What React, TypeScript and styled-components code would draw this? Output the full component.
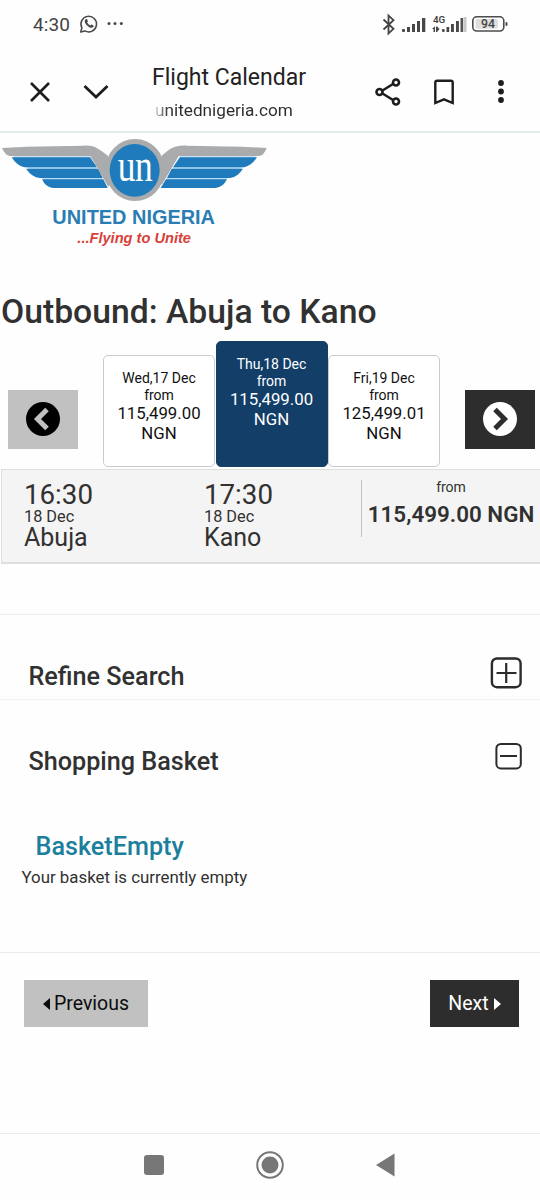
import React from "react";
import styled, { createGlobalStyle } from "styled-components";

const GlobalStyle = createGlobalStyle`
  * { box-sizing: border-box; }
  html, body { margin: 0; padding: 0; background: #fefefe; }
  body { font-family: Roboto, "Liberation Sans", sans-serif; color: #313131; }
  h1, h2, h3, p { margin: 0; font-weight: 500; }
  svg { display: block; flex: none; }
  button { font-family: inherit; border: 0; padding: 0; background: none; }
`;

const Screen = styled.div`
  width: 540px;
  height: 1200px;
  overflow: hidden;
  display: flex;
  flex-direction: column;
`;

const StatusBar = styled.div`
  height: 48px;
  padding: 0 30px 0 33px;
  display: flex;
  align-items: center;
  justify-content: space-between;
`;

const StatusGroup = styled.div`
  display: flex;
  align-items: center;
`;

const Clock = styled.span`
  font-size: 19px;
  line-height: 22px;
  letter-spacing: 0.1px;
  width: 46px;
  padding-top: 2px;
  color: #444;
`;

const Toolbar = styled.header`
  height: 85px;
  border-bottom: 2px solid #e6ebeb;
  display: flex;
  align-items: flex-start;
  color: #1d1d1d;
`;

const ToolButton = styled.button<{ $width: number }>`
  width: ${(p) => p.$width}px;
  height: 40px;
  margin-top: 24px;
  display: flex;
  align-items: center;
  justify-content: center;
  color: inherit;
`;

const PageInfo = styled.div`
  margin-left: 39px;
  width: 197px;
  padding-top: 15px;
`;

const PageTitle = styled.div`
  font-size: 23px;
  line-height: 30px;
  color: #222;
`;

const PageUrl = styled.div`
  margin-top: 5px;
  font-size: 17.2px;
  line-height: 24px;
  white-space: nowrap;
  color: transparent;
  background: linear-gradient(90deg, #fefefe 0, #2c2c2c 16px);
  background-clip: text;
  -webkit-background-clip: text;
  padding-left: 3px;
`;

const Heading = styled.h1`
  font-size: 33.7px;
  line-height: 40px;
  margin: 32px 0 0 1px;
  white-space: nowrap;
`;

const Calendar = styled.section`
  height: 126px;
  margin-top: 9px;
  display: flex;
  align-items: flex-end;
`;

const ArrowButton = styled.button<{ $dark?: boolean }>`
  width: 70px;
  height: 59px;
  margin: ${(p) => (p.$dark ? "0 0 18px 24px" : "0 25px 18px 8px")};
  background: ${(p) => (p.$dark ? "#2d2d2d" : "#c1c1c1")};
  display: flex;
  align-items: center;
  justify-content: center;
`;

const DayCard = styled.div<{ $active?: boolean }>`
  width: 112px;
  height: ${(p) => (p.$active ? 126 : 112)}px;
  margin-right: 0.5px;
  padding-top: 14px;
  border: 1px solid ${(p) => (p.$active ? "#123e68" : "#cbcbcb")};
  border-radius: 5px;
  background: ${(p) => (p.$active ? "#123e68" : "#fff")};
  color: ${(p) => (p.$active ? "#fff" : "#111")};
  text-align: center;
`;

const DayLabel = styled.div`
  font-size: 14px;
  line-height: 17px;
`;

const DayPrice = styled.div`
  font-size: 16.8px;
  line-height: 19.5px;
`;

const FlightRow = styled.section`
  margin: 2px 0 0 1px;
  height: 95px;
  padding-left: 22px;
  display: flex;
  background: #f4f4f4;
  border: solid #dedede;
  border-width: 1px 0 2px 1px;
`;

const Stop = styled.div`
  width: 180px;
  padding-top: 9px;
`;

const StopTime = styled.div`
  font-size: 27.7px;
  line-height: 32px;
`;

const StopDate = styled.div`
  margin-top: -1px;
  font-size: 16.3px;
  line-height: 14px;
`;

const StopCity = styled.div`
  font-size: 25px;
  line-height: 28px;
`;

const Fare = styled.div`
  width: 179px;
  margin: 10px 0 0 -23px;
  height: 57px;
  border-left: 1px solid #c2c2c2;
  text-align: center;
  white-space: nowrap;
`;

const FareLabel = styled.div`
  font-size: 14px;
  line-height: 16px;
  margin-top: -1px;
`;

const FareAmount = styled.div`
  font-size: 22.4px;
  line-height: 38px;
  font-weight: 600;
`;

const Panel = styled.section<{ $height: number; $gap?: number }>`
  margin-top: ${(p) => p.$gap ?? 0}px;
  height: ${(p) => p.$height}px;
  border-top: 1px solid #efefef;
`;

const PanelHeader = styled.div`
  height: 84px;
  padding: 0 18px 0 28.5px;
  display: flex;
  justify-content: space-between;
`;

const PanelTitle = styled.h2`
  margin-top: 47px;
  font-size: 25.2px;
  line-height: 30px;
`;

const BasketTitle = styled.h3`
  margin: 47px 0 0 35.5px;
  font-size: 25.2px;
  line-height: 32px;
  color: #1c7f9c;
`;

const BasketText = styled.p`
  margin: 4px 0 0 21.5px;
  font-size: 16.85px;
  line-height: 20px;
  font-weight: 400;
`;

const Pager = styled.footer`
  height: 181px;
  border-top: 1px solid #ececec;
  padding: 27px 21px 0 24px;
  display: flex;
  justify-content: space-between;
`;

const PagerButton = styled.button<{ $dark?: boolean }>`
  height: 47px;
  width: ${(p) => (p.$dark ? 89 : 124)}px;
  display: flex;
  align-items: center;
  justify-content: center;
  gap: ${(p) => (p.$dark ? 5 : 4)}px;
  font-size: 19.5px;
  line-height: 24px;
  background: ${(p) => (p.$dark ? "#2d2d2d" : "#c1c1c1")};
  color: ${(p) => (p.$dark ? "#fff" : "#0c0c0c")};
`;

const SystemNav = styled.nav`
  height: 66px;
  border-top: 1px solid #ebebeb;
  display: flex;
  padding: 15px 0 0 138px;
  gap: 84px;
`;

const IconSlot = styled.div<{ $top: number }>`
  padding-top: ${(p) => p.$top}px;
`;

const WhatsAppIcon = () => (
  <svg width="20" height="20" viewBox="0 0 20 20">
    <path d="M1.7 18l1.2-4.2A7.8 7.8 0 1 1 6 16.9z" fill="none" stroke="#484848" strokeWidth="1.5" strokeLinejoin="round" />
    <path d="M6.7 5.3c.6-.5 1.2-.4 1.5.3l.6 1.3c.1.4 0 .6-.7 1.4.8 1.6 1.7 2.400 3.300 3.200.8-.9 1-1 1.400-.9l1.500.8c.5.3.5.7.1 1.300-1 1.400-2.600 1.200-4.200.5A8.800 8.800 0 0 1 6 8.800C5.500 7.300 5.700 6.200 6.700 5.300z" fill="#484848" />
  </svg>
);

const StatusIcons = () => (
  <svg width="128" height="24" viewBox="0 0 128 24">
    <path d="M1.500 7.500l10 9.300-5 4.700v-18l5 4.700-10 9.300" fill="none" stroke="#444" strokeWidth="1.800" />
    <g fill="#484848">
      <rect x="20" y="17" width="3" height="3" rx="1" />
      <rect x="25" y="15" width="3" height="5" />
      <rect x="30" y="12" width="3" height="8" />
      <rect x="35" y="9" width="3" height="11" />
      <rect x="40" y="6" width="3.300" height="14" />
      <rect x="60" y="17" width="2.700" height="3" rx="1" />
      <rect x="64.500" y="15" width="2.700" height="5" />
      <rect x="69" y="12" width="2.900" height="8" />
      <rect x="74" y="9" width="2.900" height="11" />
      <rect x="78.500" y="6" width="2.700" height="14" fill="#555" />
      <path d="M50 17l3-2.800V20h-1.500v-3zM54 14.500h1.200L57.500 17 55 20h-1z" />
    </g>
    <rect x="81.800" y="5" width="2.700" height="15" fill="#c8c8c8" />
    <text x="51" y="11" fontSize="9.800" fontWeight="600" fill="#444" fontFamily="Roboto, sans-serif">4G</text>
    <rect x="90.800" y="4.800" width="31" height="14.200" rx="4" fill="#fefefe" stroke="#4c4c4c" strokeWidth="1.600" />
    <rect x="93.500" y="7" width="22.500" height="9.800" rx="2" fill="#dedede" />
    <text x="99" y="16.300" fontSize="12.300" fontWeight="500" fill="#444" fontFamily="Roboto, sans-serif">94</text>
    <rect x="123.500" y="10" width="2" height="4" rx="1" fill="#4c4c4c" />
  </svg>
);

const Logo = () => (
  <svg width="280" height="127" viewBox="0 9 840 381">
    <path d="M38 79H270L322 172 160 172 120 140 80 112z" fill="#b9dcf2" />
    <path d="M768 79H540L484 172 647 172 690 140 728 112z" fill="#b9dcf2" />
    <g fill="#1f7bbb">
      <path d="M35 82H270L291 112H73Q51 108 35 82z" />
      <path d="M78 116H295L308 144H119Q96 142 78 116z" />
      <path d="M126 148H310L323 174H158Q136 171 126 148z" />
      <path d="M771 82H540L519 112H733Q756 106 771 82z" />
      <path d="M729 116H515L501 144H691Q714 140 729 116z" />
      <path d="M681 148H498L482 174H647Q670 171 681 148z" />
    </g>
    <g fill="#aaabac">
      <path d="M6 54L80 50 250 47C290 45 298 61 324 77L330 160 325 171 271 78H30Q15 76 6 54z" />
      <path d="M800 54L726 50 560 47C515 45 506 62 485 77L480 165 487 162 536 78H778Q792 76 800 54z" />
      <ellipse cx="405" cy="120" rx="89" ry="93" />
    </g>
    <ellipse cx="404" cy="121" rx="75" ry="79" fill="#1f7bbb" />
    <g transform="translate(353 154) scale(0.76 1)">
      <text fontFamily="'Liberation Serif', serif" fontSize="140" letterSpacing="-2" fill="#fff">un</text>
    </g>
    <text x="157" y="283" fontFamily="'Liberation Sans', sans-serif" fontWeight="700" fontSize="61" textLength="488" lengthAdjust="spacingAndGlyphs" fill="#2a7db3">UNITED NIGERIA</text>
    <text x="232" y="339" fontFamily="'Liberation Sans', sans-serif" fontWeight="700" fontStyle="italic" fontSize="44" textLength="341" lengthAdjust="spacingAndGlyphs" fill="#d8413a">...Flying to Unite</text>
  </svg>
);

const CircleChevron = ({ disc, mark, flip }: { disc: string; mark: string; flip?: boolean }) => (
  <svg width="36" height="35" viewBox="0 0 36 35">
    <circle cx="18" cy="17" r="17" fill={disc} />
    <path d={flip ? "M13 7.500L22.500 17 13 26.500" : "M22 7.500L12.500 17 22 26.500"} fill="none" stroke={mark} strokeWidth="5" />
  </svg>
);

const days = [
  { date: "Wed,17 Dec", price: "115,499.00" },
  { date: "Thu,18 Dec", price: "115,499.00", active: true },
  { date: "Fri,19 Dec", price: "125,499.01" },
];

const stops = [
  { time: "16:30", date: "18 Dec", city: "Abuja" },
  { time: "17:30", date: "18 Dec", city: "Kano" },
];

export default function App() {
  return (
    <Screen>
      <GlobalStyle />
      <StatusBar>
        <StatusGroup>
          <Clock>4:30</Clock>
          <WhatsAppIcon />
          <svg width="28" height="20" viewBox="0 0 28 20" fill="#484848">
            <circle cx="10" cy="9.500" r="1.500" />
            <circle cx="16" cy="9.500" r="1.500" />
            <circle cx="22.300" cy="9.500" r="1.500" />
          </svg>
        </StatusGroup>
        <StatusIcons />
      </StatusBar>
      <Toolbar>
        <ToolButton $width={79}>
          <svg width="22" height="22" viewBox="0 0 22 22" fill="none" stroke="currentColor" strokeWidth="2.600">
            <path d="M2 2l18 18M20 2L2 20" />
          </svg>
        </ToolButton>
        <ToolButton $width={34}>
          <svg width="26" height="16" viewBox="0 0 26 16" fill="none" stroke="currentColor" strokeWidth="2.800">
            <path d="M1.500 2l11.500 11L24.500 2" />
          </svg>
        </ToolButton>
        <PageInfo>
          <PageTitle>Flight Calendar</PageTitle>
          <PageUrl>unitednigeria.com</PageUrl>
        </PageInfo>
        <ToolButton $width={78}>
          <svg width="28" height="30" viewBox="0 0 28 30" fill="none" stroke="currentColor" strokeWidth="2.600">
            <path d="M8.500 13.500L19 7M8.500 16.500L19 23" />
            <circle cx="5.500" cy="15" r="3" />
            <circle cx="22" cy="5.500" r="3" />
            <circle cx="22" cy="24.500" r="3" />
          </svg>
        </ToolButton>
        <ToolButton $width={34}>
          <svg width="22" height="28" viewBox="0 0 22 28" fill="none" stroke="currentColor" strokeWidth="2.400">
            <path d="M2.300 25V4.500Q2.300 2.800 4 2.800H18Q19.700 2.800 19.700 4.500V25L11 21.300z" />
          </svg>
        </ToolButton>
        <ToolButton $width={79}>
          <svg width="8" height="26" viewBox="0 0 8 26" fill="currentColor">
            <circle cx="4" cy="4" r="2.900" />
            <circle cx="4" cy="12.500" r="2.900" />
            <circle cx="4" cy="21" r="2.900" />
          </svg>
        </ToolButton>
      </Toolbar>

      <Logo />
      <Heading>Outbound: Abuja to Kano</Heading>

      <Calendar>
        <ArrowButton>
          <CircleChevron disc="#000" mark="#c1c1c1" />
        </ArrowButton>
        {days.map((day) => (
          <DayCard key={day.date} $active={day.active}>
            <DayLabel>{day.date}</DayLabel>
            <DayLabel>from</DayLabel>
            <DayPrice>{day.price}</DayPrice>
            <DayPrice>NGN</DayPrice>
          </DayCard>
        ))}
        <ArrowButton $dark>
          <CircleChevron disc="#fff" mark="#2d2d2d" flip />
        </ArrowButton>
      </Calendar>

      <FlightRow>
        {stops.map((stop) => (
          <Stop key={stop.city}>
            <StopTime>{stop.time}</StopTime>
            <StopDate>{stop.date}</StopDate>
            <StopCity>{stop.city}</StopCity>
          </Stop>
        ))}
        <Fare>
          <FareLabel>from</FareLabel>
          <FareAmount>115,499.00 NGN</FareAmount>
        </Fare>
      </FlightRow>

      <Panel $height={85} $gap={50}>
        <PanelHeader>
          <PanelTitle>Refine Search</PanelTitle>
          <IconSlot $top={42}>
            <svg width="32" height="32" viewBox="0 0 32 32" fill="none" stroke="#2b2b2b" strokeWidth="2.400">
              <rect x="1.900" y="1.500" width="28.700" height="28.700" rx="5" />
              <path d="M6.500 16H26.500M16.200 6V26" strokeWidth="2.200" />
            </svg>
          </IconSlot>
        </PanelHeader>
      </Panel>
      <Panel $height={253}>
        <PanelHeader>
          <PanelTitle>Shopping Basket</PanelTitle>
          <IconSlot $top={42}>
            <svg width="28" height="28" viewBox="0 0 28 28" fill="none" stroke="#2b2b2b" strokeWidth="2">
              <rect x="2.400" y="2" width="24.400" height="24.400" rx="4.500" />
              <path d="M6 14H23" />
            </svg>
          </IconSlot>
        </PanelHeader>
        <BasketTitle>BasketEmpty</BasketTitle>
        <BasketText>Your basket is currently empty</BasketText>
      </Panel>

      <Pager>
        <PagerButton>
          <svg width="7" height="12" viewBox="0 0 7 12">
            <path d="M7 0V12L0 6z" fill="currentColor" />
          </svg>
          Previous
        </PagerButton>
        <PagerButton $dark>
          Next
          <svg width="7" height="12" viewBox="0 0 7 12">
            <path d="M0 0V12L7 6z" fill="currentColor" />
          </svg>
        </PagerButton>
      </Pager>

      <SystemNav>
        <svg width="32" height="32" viewBox="0 0 32 32">
          <rect x="6" y="6" width="20" height="20" rx="3" fill="#777" />
        </svg>
        <svg width="32" height="32" viewBox="0 0 32 32">
          <circle cx="16" cy="16" r="12.800" fill="none" stroke="#777" strokeWidth="2" />
          <circle cx="16" cy="16" r="8.500" fill="#777" />
        </svg>
        <svg width="32" height="32" viewBox="0 0 32 32">
          <path d="M24.500 4.500V27.500L6 16z" fill="#777" />
        </svg>
      </SystemNav>
    </Screen>
  );
}
